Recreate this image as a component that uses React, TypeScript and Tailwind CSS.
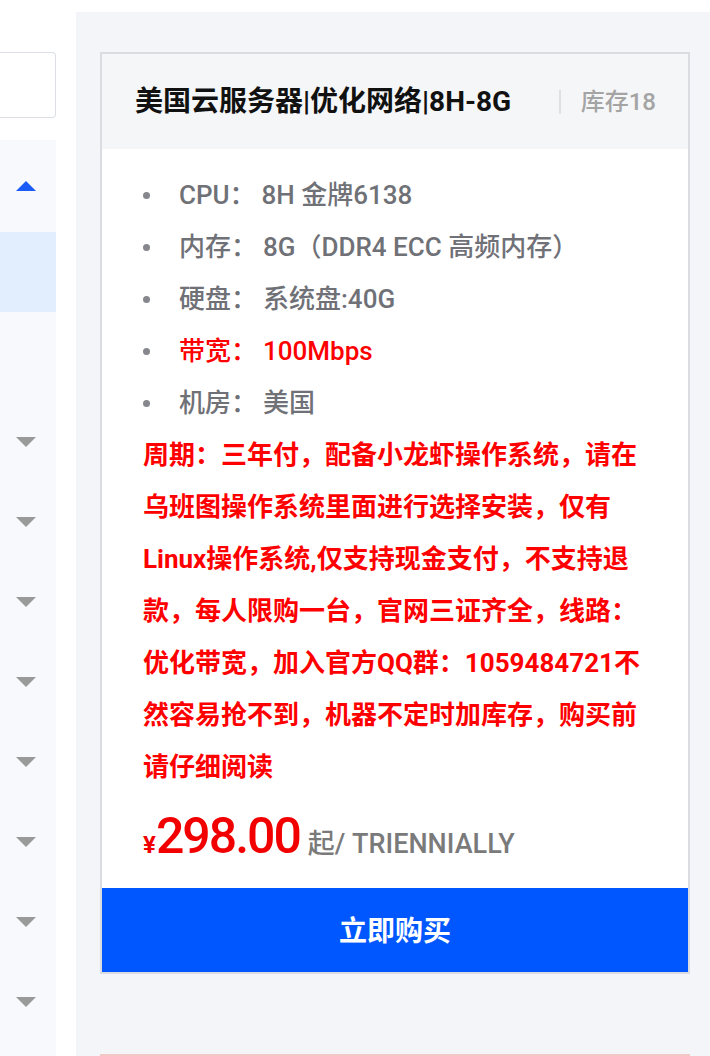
const FONT = "font-['Roboto','Noto_Sans_CJK_SC',sans-serif]";

const specs = [
  { label: "CPU：", value: "8H 金牌6138" },
  { label: "内存：", value: "8G（DDR4 ECC 高频内存）" },
  { label: "硬盘：", value: "系统盘:40G" },
  { label: "带宽：", value: "100Mbps", red: true },
  { label: "机房：", value: "美国" },
];

function DownArrow() {
  return <span className="block h-0 w-0 border-x-[10px] border-t-[10px] border-x-transparent border-t-[#9a9a9a]" />;
}

function Sidebar() {
  return (
    <aside className="flex w-[56px] shrink-0 flex-col pt-[52px]">
      <div className="h-[66px] rounded-r-[4px] border border-l-0 border-[#dcdfe6] bg-white" />
      <div className="mt-[22px] flex flex-1 flex-col bg-[#f7f9fc]">
        <div className="flex h-[92px] items-center pl-[16px]">
          <span className="block h-0 w-0 border-x-[10px] border-b-[10px] border-x-transparent border-b-[#1a5cf5]" />
        </div>
        <div className="h-[80px] bg-[#e2edfd]" />
        <div className="h-[90px]" />
        {Array.from({ length: 8 }).map((_, i) => (
          <div key={i} className="flex h-[80px] shrink-0 items-center pl-[16px]">
            <DownArrow />
          </div>
        ))}
      </div>
    </aside>
  );
}

function ProductCard() {
  return (
    <div className="w-[590px] border-2 border-[#dadce2] bg-white">
      <div className="flex h-[95px] items-center justify-between bg-[#f5f6f8] pl-[33px] pr-[32px]">
        <h3 className="text-[28px] font-bold leading-none text-[#111]">美国云服务器|优化网络|8H-8G</h3>
        <div className="flex items-center">
          <span className="mr-[20px] h-[24px] w-[2px] bg-[#e0e0e0]" />
          <span className="text-[24px] font-medium leading-none text-[#a4a4a4]">库存18</span>
        </div>
      </div>

      <div className="pl-[41px] pr-[40px] pt-[20px]">
        <ul>
          {specs.map((s) => (
            <li
              key={s.label}
              className={`flex h-[52px] items-center text-[26px] font-medium ${s.red ? "text-[#f00]" : "text-[#6f7177]"}`}
            >
              <span className="mr-[29px] h-[7px] w-[7px] rounded-full bg-[#85878d]" />
              <span>{s.label}</span>
              <span className="ml-[6px]">{s.value}</span>
            </li>
          ))}
        </ul>
        <p className="text-[26px] font-bold leading-[52px] text-[#f00]">
          周期：三年付，配备小龙虾操作系统，请在乌班图操作系统里面进行选择安装，仅有Linux操作系统,仅支持现金支付，不支持退款，每人限购一台，官网三证齐全，线路：优化带宽，加入官方QQ群：1059484721不然容易抢不到，机器不定时加库存，购买前请仔细阅读
        </p>
        <div className="flex h-[95px] items-end pb-[24px]">
          <div className="flex items-baseline">
            <span className="text-[24px] font-bold text-[#f20000]">¥</span>
            <span className="text-[50px] font-medium leading-none tracking-[-2px] text-[#f20000]">298.00</span>
            <span className="ml-[8px] text-[27px] font-medium text-[#7a7a7a]">起/ TRIENNIALLY</span>
          </div>
        </div>
      </div>

      <button className="flex h-[84px] w-full items-center justify-center bg-[#0057ff] pt-[4px] text-[28px] font-bold text-white">
        立即购买
      </button>
    </div>
  );
}

export default function App() {
  return (
    <div className={`flex h-[1056px] w-[710px] overflow-hidden bg-white ${FONT}`}>
      <Sidebar />
      <main className="ml-[20px] mt-[12px] flex-1 bg-[#f4f5f9] pl-[24px] pt-[40px]">
        <ProductCard />
        <div className="mt-[80px] h-[40px] w-[590px] border-t-2 border-[#f4c7c7] bg-white" />
      </main>
    </div>
  );
}
